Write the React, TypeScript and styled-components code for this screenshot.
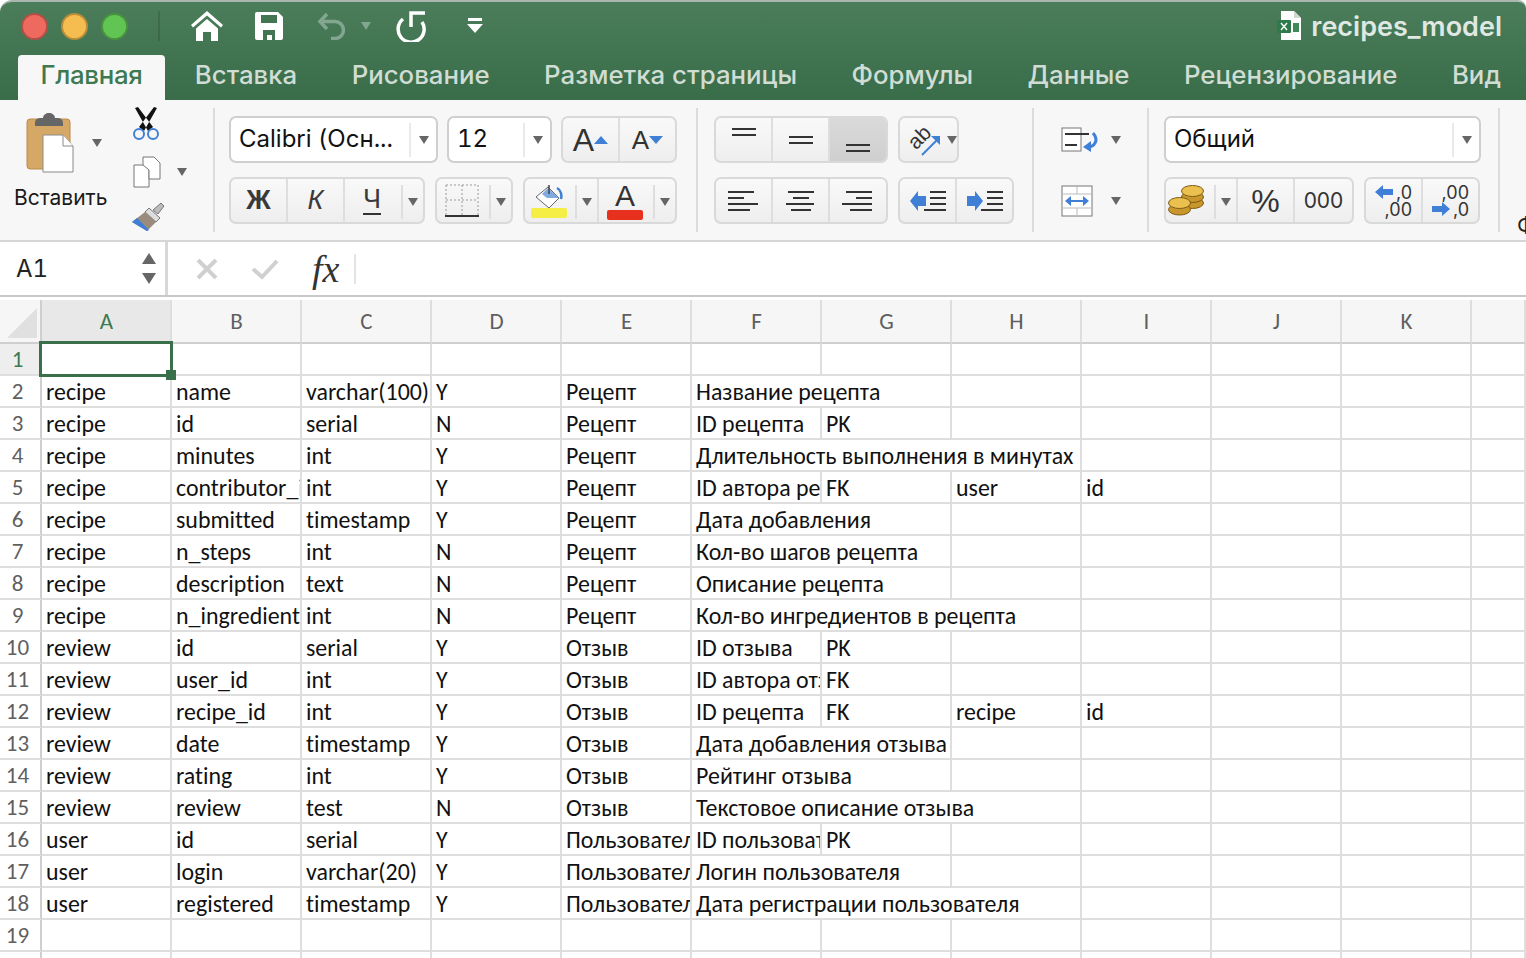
import styled, { createGlobalStyle } from "styled-components"

const GlobalStyle = createGlobalStyle`
    html, body { margin: 0; padding: 0; background: #fff; }
    * { box-sizing: border-box; }
`

const CELL_FONT = `Carlito, Lato, "Open Sans", sans-serif`
const UI_FONT = `Inter, "Liberation Sans", Arial, sans-serif`

const Page = styled.div`
    width: 1526px;
    height: 958px;
    overflow: hidden;
    background: #fff;
    font-family: ${UI_FONT};
`
const Header = styled.div`
    height: 100px;
    background: linear-gradient(#4b7d5a, #396c49);
    border-top: 2px solid #a9b8ae;
    border-top-left-radius: 12px;
    border-top-right-radius: 8px;
`
const TitleBar = styled.div`
    height: 53px;
    display: flex;
    align-items: center;
    padding: 0 24px 5px 21px;
`
const Traffic = styled.span<{ $c: string }>`
    width: 27px;
    height: 27px;
    border-radius: 50%;
    margin-right: 13px;
    background: ${p => p.$c};
    border: 2px solid rgba(0, 0, 0, 0.25);
`
const TitleSep = styled.span`
    width: 2px;
    height: 30px;
    margin: 0 31px 0 17px;
    background: rgba(0, 0, 0, 0.12);
`
const QuickIcon = styled.span<{ $w: number }>`
    width: ${p => p.$w}px;
    display: flex;
    align-items: center;
    justify-content: center;
`
const FileName = styled.div`
    margin-left: auto;
    display: flex;
    align-items: center;
    gap: 10px;
    font-size: 27px;
    font-weight: 600;
    color: #dfe8e2;
`
const Tabs = styled.div`
    height: 45px;
    display: flex;
    gap: 10.4px;
    padding-left: 18px;
`
const Tab = styled.div<{ $active?: boolean }>`
    padding: 0 ${p => (p.$active ? 22.5 : 22)}px;
    margin-right: ${p => (p.$active ? -2.5 : 0)}px;
    line-height: 39px;
    font-size: 25.8px;
    font-weight: 500;
    letter-spacing: ${p => (p.$active ? "-0.3px" : "0")};
    color: ${p => (p.$active ? "#3d7a50" : "#d0ddd4")};
    background: ${p => (p.$active ? "#f7f7f7" : "transparent")};
    border-radius: 4px 4px 0 0;
    white-space: nowrap;
`
const Ribbon = styled.div`
    height: 142px;
    background: #f7f7f7;
    border-bottom: 2px solid #d6d6d6;
    display: flex;
    overflow: hidden;
`
const Group = styled.div<{ $w: number; $pl?: number }>`
    width: ${p => p.$w}px;
    flex: none;
    padding: 16px 0 0 ${p => p.$pl ?? 16}px;
    display: flex;
    flex-direction: column;
    gap: 14px;
`
const Sep = styled.div`
    width: 2px;
    height: 124px;
    margin-top: 8px;
    flex: none;
    background: #dcdcdc;
`
const PasteGroup = styled.div`
    width: 213px;
    flex: none;
    display: flex;
    padding-left: 14px;
`
const PasteCol = styled.div`
    width: 117px;
    display: flex;
    flex-direction: column;
`
const PasteTop = styled.div`
    height: 85px;
    padding: 13px 0 0 12px;
    display: flex;
    gap: 16px;
`
const PasteLabel = styled.div`
    font-size: 21px;
    color: #1a1a1a;
`
const ToolsCol = styled.div`
    display: flex;
    flex-direction: column;
    padding-top: 7px;
    gap: 14px;
`
const ToolRow = styled.div`
    display: flex;
    align-items: center;
    gap: 16px;
    height: 33px;
    padding-left: 2px;
`
const Row = styled.div<{ $gap?: number }>`
    display: flex;
    gap: ${p => p.$gap ?? 10}px;
    height: 47px;
`
const Caret = styled.span<{ $ml?: number }>`
    flex: none;
    width: 0;
    height: 0;
    margin-left: ${p => p.$ml ?? 0}px;
    border-left: 5.5px solid transparent;
    border-right: 5.5px solid transparent;
    border-top: 8px solid #666;
`
const MutedCaret = styled(Caret)`
    border-top-color: #83a690;
`
const OrientCaret = styled(Caret)`
    margin: 18px 0 0 1px;
`
const PasteCaret = styled(Caret)`
    margin-top: 26px;
`
const Select = styled.div<{ $w: number }>`
    width: ${p => p.$w}px;
    height: 47px;
    background: #fff;
    border: 2px solid #cfcfcf;
    border-radius: 7px;
    display: flex;
    align-items: center;
    padding-left: 8px;
    font-size: 24px;
    font-variant-numeric: tabular-nums;
    color: #111;
`
const SelectText = styled.span`
    flex: 1;
    white-space: nowrap;
    padding-bottom: 3px;
`
const SelectArrow = styled.span`
    width: 27px;
    height: 34px;
    border-left: 2px solid #eaeaea;
    display: flex;
    align-items: center;
    justify-content: center;
`
const Seg = styled.div`
    display: flex;
    height: 47px;
    border: 2px solid #d9d9d9;
    border-radius: 7px;
    background: linear-gradient(#f9f9f9, #eeeeee);
    overflow: hidden;
`
const SegCell = styled.div<{ $w: number; $active?: boolean; $noLine?: boolean; $leftLine?: boolean }>`
    width: ${p => p.$w}px;
    flex: none;
    display: flex;
    align-items: center;
    justify-content: center;
    color: #333;
    border-left: ${p => (p.$leftLine ? "2px solid #dedede" : "0")};
    border-right: 2px solid ${p => (p.$noLine ? "transparent" : "#dedede")};
    background: ${p => (p.$active ? "linear-gradient(#dadada, #cfcfcf)" : "transparent")};
    &:last-child { border-right: 0; }
`
const CaretSlot = styled.div`
    width: 22px;
    height: 34px;
    margin-top: 6px;
    flex: none;
    border-left: 2px solid #dedede;
    display: flex;
    align-items: center;
    justify-content: center;
`
const StyleLetter = styled.span<{ $italic?: boolean; $bold?: boolean; $under?: boolean }>`
    font-size: 27px;
    color: #3a3a3a;
    font-family: "Liberation Sans", sans-serif;
    font-style: ${p => (p.$italic ? "italic" : "normal")};
    font-weight: ${p => (p.$bold ? 700 : 400)};
    border-bottom: ${p => (p.$under ? "2px solid #333" : "none")};
    line-height: ${p => (p.$under ? "27px" : "normal")};
`
const ColorWrap = styled.div<{ $c: string }>`
    display: flex;
    flex-direction: column;
    align-items: center;
    &::after {
        content: "";
        display: block;
        width: 36px;
        height: 10px;
        margin-top: -1px;
        border-radius: 2px;
        background: ${p => p.$c};
    }
`
const BigA = styled.span<{ $s: number }>`
    font-size: ${p => p.$s}px;
    line-height: 1;
    color: #333;
    font-family: "Liberation Sans", sans-serif;
`
const SmallNum = styled.span`
    font-size: 21px;
    color: #333;
`
const CoinIcon = styled.svg`
    margin-right: 6px;
    flex: none;
`
const Stack = styled.div`
    display: flex;
    flex-direction: column;
    font-size: 18px;
    line-height: 17px;
    color: #333;
    text-align: right;
`
const StackLine = styled.div`
    display: flex;
    align-items: center;
    justify-content: flex-end;
    gap: 3px;
`
const WrapRow = styled.div`
    display: flex;
    align-items: center;
    gap: 10px;
    height: 47px;
`
const ClippedChar = styled.div`
    padding: 112px 0 0 17px;
    font-size: 22px;
    color: #222;
    white-space: nowrap;
`
const FormulaBar = styled.div`
    height: 55px;
    display: flex;
    align-items: center;
    border-bottom: 2px solid #c9c9c9;
`
const NameBox = styled.div`
    width: 168px;
    height: 100%;
    flex: none;
    display: flex;
    align-items: center;
    justify-content: space-between;
    padding: 0 9px 0 16px;
    border-right: 3px solid #d8d8d8;
    font-size: 24px;
    font-variant-numeric: tabular-nums;
    color: #222;
`
const Spinner = styled.div`
    display: flex;
    flex-direction: column;
    gap: 9px;
`
const SpinArrow = styled.span<{ $up?: boolean }>`
    width: 0;
    height: 0;
    border-left: 7px solid transparent;
    border-right: 7px solid transparent;
    border-${p => (p.$up ? "bottom" : "top")}: 11px solid #666;
`
const FormulaTools = styled.div`
    display: flex;
    align-items: center;
    gap: 33px;
    padding-left: 28px;
`
const Fx = styled.span`
    font-family: "Liberation Serif", serif;
    font-style: italic;
    font-size: 38px;
    color: #333;
    padding-right: 15px;
    border-right: 2px solid #e4e4e4;
    line-height: 30px;
`
const SheetGap = styled.div`
    height: 3px;
`
const Sheet = styled.div`
    display: grid;
    grid-template-columns: 42px repeat(11, 130px) 54px;
    grid-template-rows: 44px;
    grid-auto-rows: 32px;
    font-family: ${CELL_FONT};
    font-size: 23.9px;
    font-variant-ligatures: none;
`
const Corner = styled.div`
    background: #f6f6f6;
    border-right: 2px solid #cfcfcf;
    border-bottom: 2px solid #cfcfcf;
    position: relative;
    &::after {
        content: "";
        position: absolute;
        right: 3px;
        bottom: 4px;
        border-style: solid;
        border-width: 0 0 30px 30px;
        border-color: transparent transparent #e0e0e0 transparent;
    }
`
const ColHead = styled.div<{ $active?: boolean }>`
    background: ${p => (p.$active ? "#e8e8e8" : "#f6f6f6")};
    border-right: 2px solid #dedede;
    border-bottom: 2px solid #cfcfcf;
    display: flex;
    align-items: center;
    justify-content: center;
    padding-left: 1px;
    font-size: 23px;
    color: ${p => (p.$active ? "#3d7a50" : "#5f5f5f")};
`
const RowHead = styled.div<{ $active?: boolean }>`
    background: ${p => (p.$active ? "#eeeeee" : "#fff")};
    border-right: 2px solid #cfcfcf;
    border-bottom: 2px solid #dedede;
    display: flex;
    align-items: center;
    justify-content: center;
    padding-right: 5px;
    font-size: 23px;
    color: ${p => (p.$active ? "#3d7a50" : "#5f5f5f")};
`
const Cell = styled.div<{ $span?: number }>`
    grid-column: span ${p => p.$span ?? 1};
    border-right: 2px solid #dedede;
    border-bottom: 2px solid #dedede;
    padding: 1px 0 0 4px;
    line-height: 29px;
    white-space: nowrap;
    overflow: hidden;
    color: #111;
`
const SelectedCell = styled.div`
    position: relative;
    z-index: 1;
    margin: -3px -1px -1px -3px;
    border: 3px solid #3a7049;
    background: #fff;
    &::after {
        content: "";
        position: absolute;
        right: -6px;
        bottom: -6px;
        width: 10px;
        height: 10px;
        background: #3a7049;
    }
`

type CellDef = string | [string, number]
const COLS = ["A", "B", "C", "D", "E", "F", "G", "H", "I", "J", "K", ""]

const R = "Рецепт"
const O = "Отзыв"
const U = "Пользователь"

const ROWS: CellDef[][] = [
    ["recipe", "name", "varchar(100)", "Y", R, ["Название рецепта", 2], "", "", "", ""],
    ["recipe", "id", "serial", "N", R, "ID рецепта", "PK", "", "", "", ""],
    ["recipe", "minutes", "int", "Y", R, ["Длительность выполнения в минутах", 3], "", "", ""],
    ["recipe", "contributor_id", "int", "Y", R, "ID автора рецепта", "FK", "user", "id", "", ""],
    ["recipe", "submitted", "timestamp", "Y", R, ["Дата добавления", 2], "", "", "", ""],
    ["recipe", "n_steps", "int", "N", R, ["Кол-во шагов рецепта", 2], "", "", "", ""],
    ["recipe", "description", "text", "N", R, ["Описание рецепта", 2], "", "", "", ""],
    ["recipe", "n_ingredients", "int", "N", R, ["Кол-во ингредиентов в рецепта", 3], "", "", ""],
    ["review", "id", "serial", "Y", O, "ID отзыва", "PK", "", "", "", ""],
    ["review", "user_id", "int", "Y", O, "ID автора отзыва", "FK", "", "", "", ""],
    ["review", "recipe_id", "int", "Y", O, "ID рецепта", "FK", "recipe", "id", "", ""],
    ["review", "date", "timestamp", "Y", O, ["Дата добавления отзыва", 2], "", "", "", ""],
    ["review", "rating", "int", "Y", O, ["Рейтинг отзыва", 2], "", "", "", ""],
    ["review", "review", "test", "N", O, ["Текстовое описание отзыва", 3], "", "", ""],
    ["user", "id", "serial", "Y", U, "ID пользователя", "PK", "", "", "", ""],
    ["user", "login", "varchar(20)", "Y", U, ["Логин пользователя", 2], "", "", "", ""],
    ["user", "registered", "timestamp", "Y", U, ["Дата регистрации пользователя", 3], "", "", ""],
    ["", "", "", "", "", "", "", "", "", "", ""],
    ["", "", "", "", "", "", "", "", "", "", ""],
]

const TABS = ["Главная", "Вставка", "Рисование", "Разметка страницы", "Формулы", "Данные", "Рецензирование", "Вид"]

const AlignLines = ({ rows }: { rows: [number, number][] }) => (
    <svg width="32" height="22" viewBox="0 0 32 22">
        {rows.map(([x, w], i) => (
            <rect key={i} x={x} y={1 + i * 6} width={w} height="2" fill="#333" />
        ))}
    </svg>
)
const VAlign = ({ y }: { y: number }) => (
    <svg width="24" height="36" viewBox="0 0 24 36">
        <rect x="0" y={y} width="24" height="2" fill="#333" />
        <rect x="0" y={y + 6} width="24" height="2" fill="#333" />
    </svg>
)
const Indent = ({ right }: { right?: boolean }) => (
    <svg width="36" height="22" viewBox="0 0 36 22">
        <path
            d={right ? "M0 6h8V1l8 10-8 10v-5H0z" : "M16 6H8V1L0 11l8 10v-5h8z"}
            fill="#3f7fd6"
        />
        <path d="M20 1h16v2H20zM20 7h16v2H20zM20 13h16v2H20zM14 19h22v2H14z" fill="#333" />
    </svg>
)

export default function App() {
    return (
        <Page>
            <GlobalStyle />
            <Header>
                <TitleBar>
                    <Traffic $c="#ee6a5f" />
                    <Traffic $c="#f5bd4f" />
                    <Traffic $c="#61c554" />
                    <TitleSep />
                    <QuickIcon $w={32}>
                        <svg width="32" height="30" viewBox="0 0 32 30">
                            <path d="M16 0 0 14l2 2.500L16 4.500 30 16.500l2-2.500z" fill="#fff" />
                            <path d="M5 17.500 16 8l11 9.500V30h-7v-9h-8v9H5z" fill="#fff" />
                        </svg>
                    </QuickIcon>
                    <QuickIcon $w={92}>
                        <svg width="28" height="28" viewBox="0 0 28 28">
                            <path d="M2 0h21l5 5v21a2 2 0 0 1-2 2H2a2 2 0 0 1-2-2V2a2 2 0 0 1 2-2z" fill="#fff" />
                            <path d="M6 3h16v8H6z" fill="#427552" />
                            <path d="M8 18h12v10h-3v-5h-5v5H8z" fill="#427552" />
                        </svg>
                    </QuickIcon>
                    <QuickIcon $w={34}>
                        <svg width="30" height="28" viewBox="0 0 30 28" fill="none" stroke="#83a690" strokeWidth="3.5">
                            <path d="M10 2 3 9.500l7 7.500" />
                            <path d="M3 9.500h15a8.500 8.500 0 0 1 0 17h-4" />
                        </svg>
                    </QuickIcon>
                    <MutedCaret $ml={12} />
                    <QuickIcon $w={80}>
                        <svg width="30" height="32" viewBox="0 0 30 32" fill="none" stroke="#fff" strokeWidth="3.5">
                            <path d="M7 9A13 13 0 1 0 26 12" />
                            <path d="M29 3H15v14" />
                        </svg>
                    </QuickIcon>
                    <QuickIcon $w={48}>
                        <svg width="16" height="16" viewBox="0 0 16 16">
                            <path d="M1 0h14v3H1zM0 6h16l-8 9z" fill="#fff" />
                        </svg>
                    </QuickIcon>
                    <FileName>
                        <svg width="24" height="30" viewBox="0 0 24 30">
                            <path d="M4 0h13l7 7v22H4z" fill="#fff" />
                            <path d="M17 0v7h7z" fill="#cfd8d2" />
                            <rect x="0" y="9" width="14" height="13" rx="1" fill="#2f7a4a" />
                            <path d="M4 12l6 7M10 12l-6 7" stroke="#fff" strokeWidth="1.4" />
                            <path d="M16 12h6v9h-6z" fill="#3f8a5a" />
                        </svg>
                        recipes_model
                    </FileName>
                </TitleBar>
                <Tabs>
                    {TABS.map((t, i) => (
                        <Tab key={t} $active={i === 0}>{t}</Tab>
                    ))}
                </Tabs>
            </Header>
            <Ribbon>
                <PasteGroup>
                    <PasteCol>
                        <PasteTop>
                            <svg width="50" height="60" viewBox="0 0 50 60">
                                <rect x="1" y="6" width="43" height="50" rx="3" fill="#d6a865" stroke="#b98c4c" />
                                <path d="M9 10c0-4 3-5 6-5h2c0-3 3-5 6-5s6 2 6 5h2c3 0 6 1 6 5v3H9z" fill="#666" />
                                <path d="M17 22h20l10 11v26H17z" fill="#fff" stroke="#8a8a8a" />
                                <path d="M37 22v11h10" fill="#fff" stroke="#8a8a8a" />
                            </svg>
                            <PasteCaret />
                        </PasteTop>
                        <PasteLabel>Вставить</PasteLabel>
                    </PasteCol>
                    <ToolsCol>
                        <svg width="30" height="34" viewBox="0 0 30 34" fill="none">
                            <path d="M4 1 7 0 22 20 17 24zM26 1 23 0 8 20 13 24z" fill="#111" />
                            <circle cx="8" cy="27" r="5" stroke="#3f7fd6" strokeWidth="2" />
                            <circle cx="22" cy="27" r="5" stroke="#3f7fd6" strokeWidth="2" />
                        </svg>
                        <ToolRow>
                            <svg width="28" height="32" viewBox="0 0 28 32" fill="#fff" stroke="#777">
                                <path d="M1 9h10l5 5v17H1z" />
                                <path d="M10 1h11l6 6v16H16v-9l-6-5z" />
                            </svg>
                            <Caret />
                        </ToolRow>
                        <svg width="34" height="30" viewBox="0 0 34 30">
                            <path d="M22 8 30 1l3 3-6 8z" fill="#bbb" stroke="#777" />
                            <path d="M18 6 29 16 25 20 14 10z" fill="#ddd" stroke="#777" />
                            <path d="M14 10 25 20 16 29 1 20z" fill="#9a8c7c" />
                            <path d="M6 16l12 12-2 1L1 20z" fill="#3f7fd6" />
                        </svg>
                    </ToolsCol>
                </PasteGroup>
                <Sep />
                <Group $w={481} $pl={14}>
                    <Row $gap={9}>
                        <Select $w={209}>
                            <SelectText>Calibri (Осн...</SelectText>
                            <SelectArrow><Caret /></SelectArrow>
                        </Select>
                        <Select $w={105}>
                            <SelectText>12</SelectText>
                            <SelectArrow><Caret /></SelectArrow>
                        </Select>
                        <Seg>
                            <SegCell $w={57}>
                                <BigA $s={32}>A</BigA>
                                <svg width="14" height="8" viewBox="0 0 14 8"><path d="M7 0l7 8H0z" fill="#3f7fd6" /></svg>
                            </SegCell>
                            <SegCell $w={55}>
                                <BigA $s={26}>A</BigA>
                                <svg width="14" height="8" viewBox="0 0 14 8"><path d="M0 0h14L7 8z" fill="#3f7fd6" /></svg>
                            </SegCell>
                        </Seg>
                    </Row>
                    <Row>
                        <Seg>
                            <SegCell $w={57}><StyleLetter $bold>Ж</StyleLetter></SegCell>
                            <SegCell $w={57}><StyleLetter $italic>К</StyleLetter></SegCell>
                            <SegCell $w={56} $noLine><StyleLetter $under>Ч</StyleLetter></SegCell>
                            <CaretSlot><Caret /></CaretSlot>
                        </Seg>
                        <Seg>
                            <SegCell $w={52} $noLine>
                                <svg width="34" height="34" viewBox="0 0 34 34" fill="none">
                                    <path d="M1 1h32M1 16h32M1 1v30M17 1v30M33 1v30" stroke="#999" strokeDasharray="2 2" />
                                    <rect x="0" y="31" width="34" height="2" fill="#333" />
                                </svg>
                            </SegCell>
                            <CaretSlot><Caret /></CaretSlot>
                        </Seg>
                        <Seg>
                            <SegCell $w={50} $noLine>
                                <ColorWrap $c="#f5ee45">
                                    <svg width="28" height="25" viewBox="0 0 28 25" fill="none">
                                        <path d="M1 13 13 3l11 11-10 10z" fill="#fff" stroke="#666" />
                                        <path d="M7 10 13 4l11 10H12z" fill="#7fa9df" />
                                        <path d="M14 1v9" stroke="#444" strokeWidth="1.5" />
                                        <path d="M22 4c4 2 5 7 4 11" stroke="#3f7fd6" strokeWidth="2.5" />
                                    </svg>
                                </ColorWrap>
                            </SegCell>
                            <CaretSlot><Caret /></CaretSlot>
                            <SegCell $w={56} $noLine $leftLine>
                                <ColorWrap $c="#e8301f">
                                    <BigA $s={30}>A</BigA>
                                </ColorWrap>
                            </SegCell>
                            <CaretSlot><Caret /></CaretSlot>
                        </Seg>
                    </Row>
                </Group>
                <Sep />
                <Group $w={334}>
                    <Row>
                        <Seg>
                            <SegCell $w={57}><VAlign y={6} /></SegCell>
                            <SegCell $w={57}><VAlign y={14} /></SegCell>
                            <SegCell $w={56} $active><VAlign y={22} /></SegCell>
                        </Seg>
                        <Seg>
                            <SegCell $w={46} $noLine>
                                <svg width="38" height="32" viewBox="0 0 38 32" fill="none">
                                    <text x="17" y="20" textAnchor="middle" fontFamily="Liberation Sans" fontSize="21" fill="#333" transform="rotate(-45 17 14)">ab</text>
                                    <path d="M19 31 36 14" stroke="#3f7fd6" strokeWidth="2" />
                                    <path d="M37 12v9l-9-9z" fill="#3f7fd6" />
                                </svg>
                            </SegCell>
                            <OrientCaret />
                        </Seg>
                    </Row>
                    <Row>
                        <Seg>
                            <SegCell $w={57}><AlignLines rows={[[0, 26], [0, 16], [0, 30], [0, 22]]} /></SegCell>
                            <SegCell $w={57}><AlignLines rows={[[3, 26], [8, 16], [1, 28], [6, 20]]} /></SegCell>
                            <SegCell $w={56}><AlignLines rows={[[4, 26], [14, 16], [0, 30], [8, 22]]} /></SegCell>
                        </Seg>
                        <Seg>
                            <SegCell $w={57}><Indent /></SegCell>
                            <SegCell $w={55}><Indent right /></SegCell>
                        </Seg>
                    </Row>
                </Group>
                <Sep />
                <Group $w={113} $pl={27}>
                    <WrapRow>
                        <svg width="40" height="26" viewBox="0 0 40 26" fill="none">
                            <rect x="1" y="1" width="19" height="23" stroke="#777" fill="#fff" />
                            <path d="M4 7h24M4 18h12" stroke="#333" strokeWidth="2" />
                            <path d="M32 6c6 7 2 14-6 14" stroke="#3f7fd6" strokeWidth="3" />
                            <path d="M30 14v11l-8-5z" fill="#3f7fd6" />
                        </svg>
                        <Caret />
                    </WrapRow>
                    <WrapRow>
                        <svg width="40" height="32" viewBox="0 0 40 32" fill="none">
                            <rect x="1" y="1" width="30" height="30" stroke="#777" fill="#fff" />
                            <path d="M1 9h30M1 23h30M16 1v8M16 23v8" stroke="#bbb" />
                            <path d="M6 16h20" stroke="#3f7fd6" strokeWidth="2" />
                            <path d="M10 11v10l-6-5zM22 11v10l6-5z" fill="#3f7fd6" />
                        </svg>
                        <Caret />
                    </WrapRow>
                </Group>
                <Sep />
                <Group $w={349} $pl={15}>
                    <Row>
                        <Select $w={317}>
                            <SelectText>Общий</SelectText>
                            <SelectArrow><Caret /></SelectArrow>
                        </Select>
                    </Row>
                    <Row>
                        <Seg>
                            <SegCell $w={48} $noLine>
                                <CoinIcon width="36" height="31" viewBox="0 0 36 31">
                                    <g stroke="#7d5c14" fill="#c9962c">
                                        <ellipse cx="24.500" cy="18" rx="11" ry="5.500" />
                                        <ellipse cx="24.500" cy="12" rx="11" ry="5.500" />
                                        <ellipse cx="24.500" cy="6" rx="11" ry="5.500" fill="#ebc04e" />
                                        <ellipse cx="11.500" cy="24.500" rx="11" ry="5.500" />
                                        <ellipse cx="11.500" cy="18" rx="11" ry="5.500" fill="#ebc04e" />
                                    </g>
                                </CoinIcon>
                            </SegCell>
                            <CaretSlot><Caret /></CaretSlot>
                            <SegCell $w={59} $leftLine>
                                <BigA $s={32}>%</BigA>
                            </SegCell>
                            <SegCell $w={57}><SmallNum>000</SmallNum></SegCell>
                        </Seg>
                        <Seg>
                            <SegCell $w={57}>
                                <Stack>
                                    <StackLine>
                                        <svg width="18" height="14" viewBox="0 0 18 14"><path d="M0 7l8-7v4h10v6H8v4z" fill="#3f7fd6" /></svg>
                                        ,0
                                    </StackLine>
                                    <StackLine>,00</StackLine>
                                </Stack>
                            </SegCell>
                            <SegCell $w={55}>
                                <Stack>
                                    <StackLine>,00</StackLine>
                                    <StackLine>
                                        <svg width="18" height="14" viewBox="0 0 18 14"><path d="M18 7l-8-7v4H0v6h10v4z" fill="#3f7fd6" /></svg>
                                        ,0
                                    </StackLine>
                                </Stack>
                            </SegCell>
                        </Seg>
                    </Row>
                </Group>
                <Sep />
                <ClippedChar>Ф</ClippedChar>
            </Ribbon>
            <FormulaBar>
                <NameBox>
                    A1
                    <Spinner>
                        <SpinArrow $up />
                        <SpinArrow />
                    </Spinner>
                </NameBox>
                <FormulaTools>
                    <svg width="22" height="22" viewBox="0 0 22 22">
                        <path d="M2 2l18 18M20 2 2 20" stroke="#d0d0d0" strokeWidth="4" />
                    </svg>
                    <svg width="28" height="22" viewBox="0 0 28 22" fill="none">
                        <path d="M2 11l9 8L26 3" stroke="#d0d0d0" strokeWidth="4" />
                    </svg>
                    <Fx>fx</Fx>
                </FormulaTools>
            </FormulaBar>
            <SheetGap />
            <Sheet>
                <Corner />
                {COLS.map((c, i) => (
                    <ColHead key={i} $active={i === 0}>{c}</ColHead>
                ))}
                <RowHead $active>1</RowHead>
                <SelectedCell />
                {COLS.slice(1).map((_, i) => (
                    <Cell key={i} />
                ))}
                {ROWS.map((row, r) => (
                    <SheetRow key={r} n={r + 2} row={row} />
                ))}
            </Sheet>
        </Page>
    )
}

function SheetRow({ n, row }: { n: number; row: CellDef[] }) {
    return (
        <>
            <RowHead>{n < 20 ? n : ""}</RowHead>
            {row.map((c, i) =>
                typeof c === "string"
                    ? <Cell key={i}>{c}</Cell>
                    : <Cell key={i} $span={c[1]}>{c[0]}</Cell>
            )}
            <Cell />
        </>
    )
}
